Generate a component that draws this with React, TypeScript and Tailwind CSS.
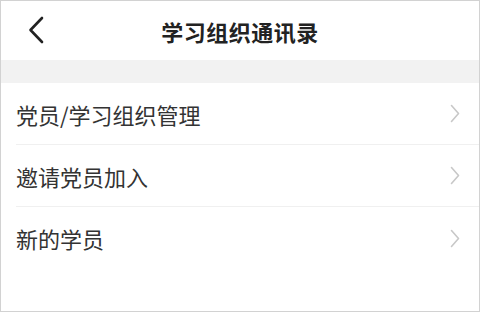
const items = ["党员/学习组织管理", "邀请党员加入", "新的学员"];

export default function App() {
  return (
    <div
      className="w-[480px] h-[312px] bg-white border border-[#d2d2d2] overflow-hidden"
      style={{ fontFamily: '"Noto Sans CJK SC", "Noto Sans", sans-serif' }}
    >
      <header className="relative h-[59px] flex items-center justify-center">
        <button className="absolute left-[27px] top-[15px] w-[16px] h-[28px] flex items-center justify-center">
          <svg width="16" height="28" viewBox="0 0 16 28" fill="none">
            <path
              d="M14 2 L2.5 14 L14 26"
              stroke="#222"
              strokeWidth="2.6"
              strokeLinecap="round"
              strokeLinejoin="round"
            />
          </svg>
        </button>
        <h1 className="text-[22px] font-bold text-[#222] leading-none tracking-[0.5px]">
          学习组织通讯录
        </h1>
      </header>
      <div className="h-[23px] bg-[#f2f2f2]" />
      <ul>
        {items.map((label, idx) => (
          <li key={idx} className="pl-[15px]">
            <div
              className={
                "h-[62px] flex items-center justify-between pr-[19px] " +
                (idx < items.length - 1 ? "border-b border-[#f0f0f0]" : "")
              }
            >
              <span className="text-[22px] text-[#333] leading-none">{label}</span>
              <svg width="10" height="19" viewBox="0 0 10 19" fill="none">
                <path
                  d="M1.5 1.5 L8.5 9.5 L1.5 17.5"
                  stroke="#c8c8c8"
                  strokeWidth="1.6"
                  strokeLinecap="round"
                  strokeLinejoin="round"
                />
              </svg>
            </div>
          </li>
        ))}
      </ul>
    </div>
  );
}
